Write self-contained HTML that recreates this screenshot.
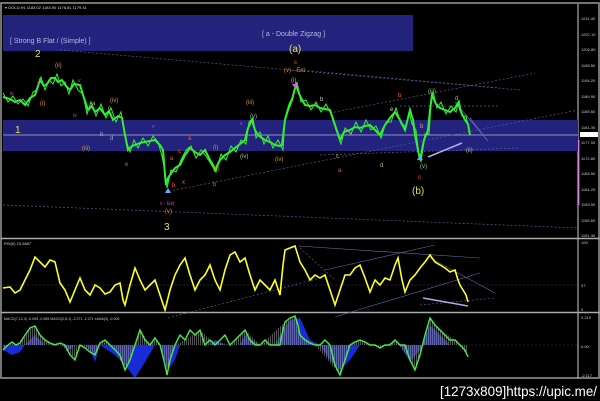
<!DOCTYPE html>
<html><head><meta charset="utf-8"><style>
html,body{margin:0;padding:0;background:#000;width:600px;height:401px;overflow:hidden}
svg{display:block}
text{font-family:"Liberation Sans",sans-serif}
</style></head><body>
<svg width="600" height="401" viewBox="0 0 600 401" xmlns="http://www.w3.org/2000/svg">
<defs>
<pattern id="hist" width="2" height="10" patternUnits="userSpaceOnUse"><rect width="0.6" height="10" fill="#8a8a8a"/></pattern>
</defs>
<rect width="600" height="401" fill="#000"/>
<rect x="1" y="3" width="598" height="375" fill="none" stroke="#9a9a9a" stroke-width="1.5"/>
<line x1="578" y1="4" x2="578" y2="378" stroke="#ccc" stroke-width="1"/>
<line x1="1" y1="238.5" x2="600" y2="238.5" stroke="#aaa" stroke-width="1.5"/>
<line x1="1" y1="312.5" x2="600" y2="312.5" stroke="#aaa" stroke-width="1.5"/>
<rect x="3" y="15" width="410" height="36" fill="#23237e"/>
<rect x="3" y="120" width="575" height="31" fill="#23237e"/>
<line x1="3" y1="135" x2="578" y2="135" stroke="#b8b8d8" stroke-width="0.8"/>
<text x="10" y="43" font-size="7" fill="#b8b8e0">[ Strong B Flat / (Simple) ]</text>
<text x="262" y="36" font-size="7" fill="#b8b8e0">[ a - Double Zigzag ]</text>
<text x="5" y="9" font-size="4" fill="#ddd">▾ GOLD,H1  1183.02 1183.90 1176.81 1179.41</text>
<g stroke="#5a5a9a" stroke-width="0.7" stroke-dasharray="2,2" fill="none">
<line x1="60" y1="50" x2="520" y2="90"/>
<line x1="3" y1="205" x2="578" y2="228"/>
<line x1="165" y1="192" x2="578" y2="110"/>
<line x1="300" y1="70" x2="500" y2="88"/>
<line x1="330" y1="113" x2="535" y2="73"/>
<line x1="400" y1="106" x2="500" y2="106"/>
<line x1="320" y1="155" x2="520" y2="148"/>
</g>
<line x1="470" y1="118" x2="487" y2="140" stroke="#6a6aa8" stroke-width="0.7"/>
<line x1="455" y1="102" x2="488" y2="141" stroke="#6a6aa8" stroke-width="0.7"/>
<line x1="428" y1="157" x2="462" y2="143" stroke="#b0a8e8" stroke-width="1.6"/>
<g fill="none" stroke="#33ee33">
<polyline stroke-width="2" points="3,97 10,99 15,102 20,100 25,105 30,98 35,95 38,86 40,80 44,86 47,84 51,78 55,78 58,82 62,80 66,86 70,90 74,84 80,85 84,98 88,110 92,106 95,112 100,108 105,115 109,111 113,120 118,116 122,118 125,135 128,150 132,146 135,145 140,143 145,142 150,141 155,140 160,145 163,150 165,175 166,185 168,178 170,175 175,168 180,165 185,155 190,148 195,152 200,155 205,150 210,160 213,165 215,170 220,160 225,155 230,152 235,148 240,144 245,140 248,128 252,120 255,130 258,135 262,138 265,140 270,142 275,145 280,146 282,145 284,128 285,120 288,110 292,100 294,92 296,85 300,96 305,105 310,106 315,105 320,108 325,109 330,110 335,125 340,140 344,132 350,130 355,127 360,128 365,126 370,125 375,130 380,135 385,125 390,118 395,112 400,120 405,130 408,118 410,110 413,120 415,135 418,150 420,160 424,140 428,130 430,110 432,95 436,104 440,108 445,110 450,112 455,108 458,103 461,112 465,120 468,124 470,135"/>
<polyline stroke-width="1" points="3,93 8,102 13,96 18,104 23,99 28,106 33,92 37,90 41,77 45,90 49,80 53,84 57,74 61,86 65,82 69,94 73,80 78,90 83,94 87,114 91,102 96,116 101,104 106,118 111,108 116,122 121,112 126,140 130,152 134,140 138,148 143,138 148,146 153,136 158,142 162,156 165,172 167,188 171,170 176,172 181,160 186,150 191,146 196,158 201,150 206,156 211,164 216,172 221,154 226,160 231,146 236,152 241,140 246,144 249,122 253,118 256,138 260,132 264,144 268,136 273,148 278,140 283,150 285,118 289,104 293,96 297,82 301,102 306,100 311,110 316,102 321,112 326,104 331,114 336,130 341,144 345,128 351,134 356,122 361,132 366,120 371,130 376,126 381,138 386,122 391,122 396,108 401,124 406,126 409,112 412,124 416,130 419,156 421,162 425,134 429,134 431,104 433,92 437,108 441,102 446,114 451,106 456,112 459,100 462,116 466,116 469,130"/>
</g>
<g font-size="6">
<text x="35" y="57" font-size="10" fill="#e8e050">2</text>
<text x="15" y="133" font-size="10" fill="#e8e050">1</text>
<text x="164" y="230" font-size="10" fill="#e8e050">3</text>
<text x="289" y="52" font-size="10" fill="#e8e050">(a)</text>
<text x="412" y="194" font-size="10" fill="#e8e050">(b)</text>
<text x="294" y="64" fill="#ff5520">c</text>
<text x="284" y="72" fill="#e09020">(v) - Ext</text>
<text x="55" y="67" fill="#e09020">(ii)</text>
<text x="110" y="102" fill="#e09020">(iv)</text>
<text x="82" y="150" fill="#e09020">(iii)</text>
<text x="40" y="105" fill="#e09020">(i)</text>
<text x="246" y="104" fill="#e09020">(iii)</text>
<text x="275" y="161" fill="#e09020">(iv)</text>
<text x="165" y="213" fill="#e09020">(v)</text>
<text x="170" y="160" fill="#ff5520">a</text>
<text x="178" y="153" fill="#ff5520">c</text>
<text x="188" y="140" fill="#ff5520">a</text>
<text x="172" y="187" fill="#ff5520">b</text>
<text x="182" y="184" fill="#ff5520">x</text>
<text x="213" y="186" fill="#ff5520">b</text>
<text x="338" y="172" fill="#ff5520">a</text>
<text x="398" y="97" fill="#ff5520">b</text>
<text x="418" y="179" fill="#ff5520">c</text>
<text x="213" y="170" fill="#e09020">(ii)</text>
<text x="213" y="149" fill="#e09020">(i)</text>
<text x="92" y="105" fill="#c0b060">a</text>
<text x="108" y="110" fill="#c0b060">c</text>
<text x="100" y="136" fill="#aaa">b</text>
<text x="110" y="140" fill="#aaa">d</text>
<text x="320" y="101" fill="#ccc">b</text>
<text x="390" y="111" fill="#ccc">e</text>
<text x="380" y="167" fill="#c0b060">d</text>
<text x="336" y="158" fill="#c0b060">c</text>
<text x="455" y="100" fill="#aaa">d</text>
<text x="466" y="152" fill="#8c8">(ii)</text>
<text x="250" y="118" fill="#8c8">(v)</text>
<text x="420" y="168" fill="#8c8">(v)</text>
<text x="428" y="93" fill="#8c8">(iii)</text>
<text x="291" y="82" fill="#8c8">(i)</text>
<text x="240" y="158" fill="#8c8">(iv)</text>
<text x="420" y="128" fill="#c0b060">b</text>
</g>
<g fill="#cc44cc" font-size="5">
<text x="10" y="95">iv</text><text x="37" y="85">v</text><text x="78" y="82">v</text><text x="73" y="117">iv</text><text x="125" y="166">iii</text><text x="152" y="128">v</text><text x="160" y="205">v - Ext</text><text x="240" y="125">v</text>
</g>
<polygon points="295,88 292,84 298,84" fill="#ff44ff"/>
<polygon points="168,188 165,193 171,193" fill="#66aaff"/>
<polygon points="420,155 417,160 423,160" fill="#66aaff"/>
<g font-size="4" fill="#ccc">
<text x="581" y="20">1211.40</text><text x="581" y="36">1207.10</text><text x="581" y="51">1202.80</text><text x="581" y="67">1198.50</text><text x="581" y="82">1194.20</text><text x="581" y="98">1189.90</text><text x="581" y="113">1185.60</text><text x="581" y="129">1181.30</text><text x="581" y="144">1177.00</text><text x="581" y="160">1172.80</text><text x="581" y="175">1168.50</text><text x="581" y="191">1164.20</text><text x="581" y="206">1159.90</text><text x="581" y="222">1155.60</text><text x="581" y="237">1151.30</text>
</g>
<rect x="580" y="132" width="18" height="5" fill="#fff"/>
<line x1="579" y1="140" x2="579" y2="205" stroke="#dd33dd" stroke-width="1"/>
<text x="4" y="245" font-size="4" fill="#ccc">RSI(8) 15.6687</text>
<line x1="3" y1="285" x2="578" y2="285" stroke="#444477" stroke-width="0.6" stroke-dasharray="2,2"/>
<g stroke="#6a6aa8" stroke-width="0.6" fill="none">
<line x1="298" y1="246" x2="480" y2="258"/>
<line x1="325" y1="270" x2="435" y2="245"/>
<line x1="335" y1="317" x2="480" y2="273"/>
<line x1="430" y1="258" x2="495" y2="293"/>
<line x1="168" y1="318" x2="320" y2="278" stroke-dasharray="2,2"/>
<line x1="300" y1="248" x2="335" y2="280" stroke-dasharray="2,2"/>
<line x1="420" y1="305" x2="495" y2="298" stroke-dasharray="2,2"/>
</g>
<line x1="423" y1="298" x2="468" y2="306" stroke="#b0a8e8" stroke-width="1.6"/>
<polyline fill="none" stroke="#ffff22" stroke-width="1.6" points="3,288 10,287 15,293 20,290 25,280 30,270 35,257 40,262 45,267 50,260 55,262 60,283 65,290 70,302 75,290 80,278 85,290 90,295 95,285 100,288 105,294 110,292 115,285 120,283 123,300 125,305 130,285 135,268 140,280 145,290 150,285 155,280 160,295 165,310 170,290 175,275 180,265 185,258 190,275 195,290 200,280 205,275 210,265 215,280 220,290 225,270 230,255 235,252 240,262 245,258 250,275 255,290 260,280 265,285 270,290 275,280 280,295 283,265 285,250 290,248 295,246 300,262 305,270 310,280 315,275 320,278 325,275 330,290 335,305 340,290 345,275 350,275 355,268 360,265 365,278 370,292 375,280 380,285 385,278 390,280 395,265 398,258 402,280 405,292 410,280 415,275 420,268 425,262 430,255 435,262 440,265 445,268 450,272 455,270 458,280 460,285 463,290 466,295 468,302"/>
<g font-size="4" fill="#ccc"><text x="581" y="244">100</text><text x="581" y="287">37</text><text x="581" y="311">0</text></g>
<text x="4" y="320" font-size="3.6" fill="#ccc">MACD(7,12,3) -0.005 -0.555  MACD(2,8,1) -2.271 -2.271  ±sMA(3) -0.005</text>
<line x1="3" y1="345" x2="578" y2="345" stroke="#443366" stroke-width="0.6" stroke-dasharray="2,2"/>
<polygon fill="#1a2ad8" points="3,345 3,350 12,355 20,352 25,345 35,335 45,345 60,345 70,350 75,345 85,345 90,350 95,362 100,345 115,355 125,365 135,378 145,362 155,345 160,345 168,370 175,360 180,345 210,345 215,340 225,345 240,345 245,335 260,345 270,345 275,345 283,330 290,320 300,318 310,340 320,345 330,360 340,370 350,360 360,345 390,345 400,345 410,362 420,350 430,325 440,335 450,345 468,345 468,345"/>
<polygon fill="url(#hist)" points="3,345 3,350 8,345 12,342 16,345 25,335 30,328 35,326 40,335 50,343 60,343 70,355 75,360 80,345 90,352 95,355 100,343 105,340 115,350 125,370 135,345 140,330 150,345 155,338 160,345 167,375 175,345 185,340 200,330 210,340 230,345 245,330 260,345 285,322 295,316 300,335 315,345 340,375 350,345 360,340 380,348 395,340 410,360 415,370 425,335 430,318 440,330 455,340 468,357 468,345"/>
<polyline fill="none" stroke="#44ee44" stroke-width="1.4" points="3,350 8,345 12,342 16,345 20,343 25,335 30,328 35,326 40,335 45,340 50,343 55,345 60,343 65,345 70,355 75,360 80,345 85,348 90,352 95,355 100,343 105,340 110,345 115,350 120,355 125,370 130,360 135,345 140,330 145,340 150,345 155,338 160,345 165,365 167,375 170,360 175,345 180,335 185,340 190,330 195,335 200,330 205,345 210,340 215,345 220,340 225,335 230,345 235,340 240,335 245,330 250,340 255,345 260,345 265,340 270,345 275,345 280,345 283,330 285,322 290,318 295,316 298,325 300,335 305,340 310,343 315,345 320,345 325,340 330,345 335,365 340,375 345,360 350,345 355,342 360,340 365,342 370,345 375,345 380,348 385,345 390,345 395,340 400,345 405,345 410,360 415,370 420,355 425,335 430,318 435,325 440,330 445,335 450,340 455,340 460,345 465,350 468,357"/>
<g font-size="4" fill="#ccc"><text x="581" y="319">2.219</text><text x="581" y="348">0.00</text><text x="581" y="377">-2.117</text></g>
<text x="440" y="396" font-size="14" fill="#fff" font-family="Liberation Mono, monospace" textLength="157" lengthAdjust="spacingAndGlyphs">[1273x809]https://upic.me/</text>
</svg>
</body></html>
